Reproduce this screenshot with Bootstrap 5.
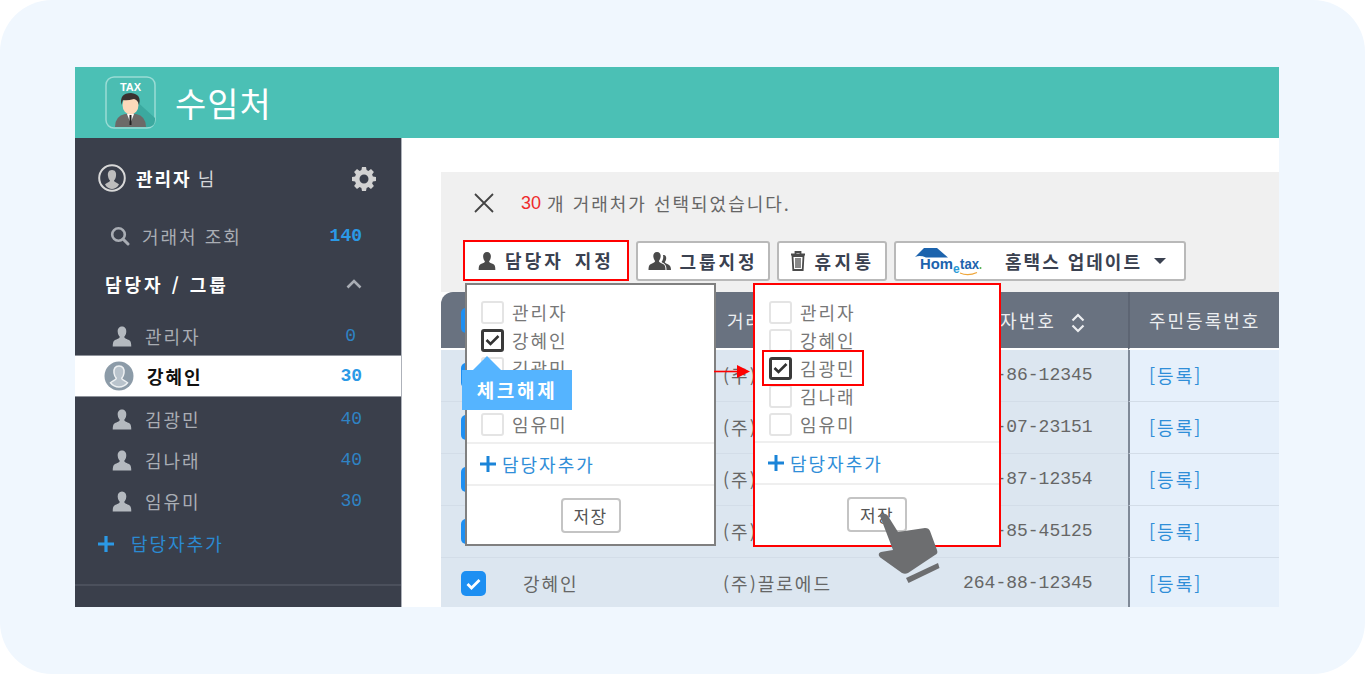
<!DOCTYPE html>
<html lang="ko">
<head>
  <meta charset="UTF-8" />
  <title>수임처</title>
  <link rel="stylesheet" href="https://cdn.jsdelivr.net/npm/bootstrap@5.3.0/dist/css/bootstrap.min.css" />
  <style>
    html, body { height: 100%; }
    body {
      margin: 0;
      background: #fff;
      overflow: hidden;
      font-family: "Noto Sans CJK KR", "Noto Sans", sans-serif;
      font-size: 18px;
      color: #666;
      letter-spacing: 2px;
    }
    .stage {
      width: 1365px;
      height: 674px;
      background: #f0f7fe;
      border-radius: 52px;
      padding: 67px 86px 67px 75px;
    }
    .frame { position: relative; width: 1204px; height: 540px; overflow: hidden; background: #fff; }
    .top-bar { height: 71px; background: #4bc0b5; padding-left: 30px; gap: 19px; }
    .top-bar h1 { margin: 0; font-size: 34px; font-weight: 400; color: #fff; letter-spacing: 1px; line-height: 1; }
    .body-wrap { height: 469px; }

    .side { width: 327px; flex: none; background: #3a3f4b; border-right: 1px solid #aeb2ba; color: #a9adb4; }
    .side-row { height: 41px; padding-right: 39px; }
    .side-user { height: 40px; margin-top: 20px; margin-bottom: 18px; padding-left: 23px; padding-right: 24px; }
    .side-user b { color: #fff; margin-left: 10px; font-weight: 700; }
    .side-user span { color: #d5d7da; margin-left: 6px; }
    .side-search { height: 40px; padding-left: 35px; padding-right: 39px; margin-bottom: 8px; }
    .side-search span { margin-left: 12px; }
    .side-group { height: 40px; padding-left: 30px; padding-right: 39px; margin-bottom: 13px; color: #fff; font-weight: 700; letter-spacing: 3px; }
    .side-item { padding-left: 37px; }
    .side-item span { margin-left: 13px; }
    .side-item.first { height: 39px; border-bottom: 1px solid #8f939b; }
    .side-item.on { background: #fff; color: #111; font-weight: 700; padding-left: 29px; border-bottom: 1px solid #8f939b; margin-bottom: 2px; }
    .side-item.on span { margin-left: 13px; }
    .count { font-family: "Liberation Mono", monospace; font-size: 18px; letter-spacing: 0; color: #2f83c4; }
    .count.strong { color: #2b99e6; font-weight: 700; }
    .count.zero { padding-right: 6px; }
    .side-add { height: 43px; padding-left: 23px; color: #2b8ad2; }
    .side-add span { margin-left: 17px; }
    .side-line { height: 2px; background: #4b505c; margin-top: 19px; }

    .main { flex: 1; padding: 34px 0 0 39px; }
    .tool-panel { height: 120px; background: #f0f0f0; padding: 0 0 0 22px; }
    .msg-row { height: 68px; padding: 0 0 6px 11px; }
    .msg-row .cnt { color: #ee2b2b; margin-left: 27px; font-family: "Liberation Sans", sans-serif; font-size: 18px; letter-spacing: 0; margin-right: 6px; }
    .tool-btns { gap: 7px; height: 42px; }
    .tool-btn {
      height: 40px;
      margin-top: 1px;
      background: #fff;
      border: 2px solid #b9b9b9;
      border-radius: 3px;
      color: #3a4150;
      font-weight: 700;
      font-size: 18px;
      letter-spacing: 3px;
      padding: 0;
      gap: 7px;
    }
    .tool-btn.assign { width: 166px; height: 41px; margin-top: 0; border-color: #f00; border-radius: 0; gap: 9px; word-spacing: 3px; }
    .tool-btn.group { width: 134px; }
    .tool-btn.trash { width: 110px; gap: 9px; letter-spacing: 3.4px; }
    .tool-btn.hometax { width: 292px; gap: 11px; letter-spacing: 2px; }
    .tool-btn.hometax svg { margin-right: 12px; }
    .caret-down { width: 0; height: 0; border-left: 6px solid transparent; border-right: 6px solid transparent; border-top: 6px solid #3a4150; margin-left: 1px; }

    .grid-table { width: 838px; table-layout: fixed; margin: 0; border-collapse: separate; border-spacing: 0; }
    .grid-table th {
      height: 58px;
      background: #697280;
      color: #eceef0;
      font-weight: 400;
      vertical-align: middle;
      border: 0;
      padding: 0;
      border-bottom: 2px solid #fff;
    }
    .grid-table th:first-child { border-top-left-radius: 12px; }
    .grid-table th.with-gap { padding-left: 4px; }
    .grid-table td {
      height: 52px;
      background: #dce6f0;
      color: #666;
      vertical-align: middle;
      padding: 0;
      border: 0;
      border-bottom: 1px solid #d3dde8;
    }
    .grid-table .pad-first { padding-left: 20px; }
    .grid-table .reg-no { font-family: "Liberation Mono", monospace; font-size: 18px; letter-spacing: 0; }
    .grid-table th.last, .grid-table td.last { padding-left: 19px; border-left: 2px solid #7f8997; }
    .grid-table th.last { border-left-color: #5d6573; }
    .grid-table td.last { background: #e6f0fb; color: #2f8ed8; }
    .tick-blue { display: flex; align-items: center; justify-content: center; width: 25px; height: 25px; background: #1d8ff2; border-radius: 5px; }

    .pop-box { position: absolute; top: 216px; background: #fff; padding-top: 13px; }
    .pop-one { left: 390px; width: 251px; height: 263px; border: 2px solid #808080; }
    .pop-two { left: 678px; width: 248px; height: 264px; border: 2px solid #f00; }
    .pop-row { height: 28px; padding-left: 14px; gap: 8px; color: #777; }
    .box-off { width: 23px; height: 23px; background: #fff; border: 2px solid #e4e4e4; border-radius: 3px; flex: none; }
    .box-on { width: 23px; height: 23px; background: #fff; border: 3px solid #3a3a3a; border-radius: 3px; flex: none; display: flex; align-items: center; justify-content: center; }
    .pop-add { height: 44px; margin-top: 3px; padding-left: 13px; gap: 6px; color: #2f8ed8; border-top: 2px solid #efefef; border-bottom: 2px solid #efefef; }
    .pop-one .pop-add { margin-top: 4px; }
    .pop-foot { padding-top: 12px; }
    .save-btn { width: 60px; height: 35px; padding: 0; background: #fff; border: 2px solid #c4c4c4; border-radius: 4px; color: #555; font-size: 17px; letter-spacing: 1.4px; }
    .pick-box { position: absolute; left: 687px; top: 283px; width: 102px; height: 36px; border: 2px solid #f00; background: transparent; }
    .tip-box {
      position: absolute; left: 387px; top: 303px; width: 110px; height: 40px;
      background: #55b4ff; color: #fff; font-weight: 700; font-size: 19px; letter-spacing: 2.7px;
    }
    .tip-box::before {
      content: ""; position: absolute; left: 11px; top: -14px;
      border-left: 14px solid transparent; border-right: 14px solid transparent; border-bottom: 14px solid #55b4ff;
    }
    .overlay-svg { position: absolute; left: 0; top: 0; pointer-events: none; }
  </style>
</head>
<body>
  <div class="stage">
    <div class="frame">
      <!-- Top bar -->
      <header class="top-bar d-flex align-items-center">
        <svg width="51" height="53" viewBox="0 0 51 53">
          <rect x="1" y="1" width="49" height="51" rx="8" fill="#4bbdb2" stroke="#9adcd5" stroke-width="1.5"/>
          <path d="M28 22 L50 42 V44 Q50 51 43 51 H22 Z" fill="#3ba99f"/>
          <text x="25.5" y="15" text-anchor="middle" font-family="Liberation Sans" font-size="11" font-weight="700" fill="#fff" letter-spacing="0">TAX</text>
          <path d="M10 51 Q10 40 20 38 H31 Q41 40 41 51 Z" fill="#6c6a68"/>
          <path d="M22 38 L25.500 47 L29 38 Z" fill="#fff"/>
          <rect x="24.500" y="39" width="2" height="10" fill="#222"/>
          <ellipse cx="25.500" cy="29" rx="8" ry="9.500" fill="#fcd9ba"/>
          <path d="M16.500 29 Q14 17 26 17 Q37 18 34 29 Q33 24 29 23 Q22 25 18 24 Q17 26 16.500 29 Z" fill="#3a3330"/>
        </svg>
        <h1>수임처</h1>
      </header>

      <div class="body-wrap d-flex">
        <!-- Sidebar -->
        <aside class="side">
          <div class="side-user d-flex align-items-center">
            <svg width="28" height="28" viewBox="0 0 28 28">
              <circle cx="14" cy="14" r="12.800" fill="#3a3f4b" stroke="#d8d8d8" stroke-width="2"/>
              <path d="M14 6 C10.500 6 9.500 9 10 12 C10.300 14 11 15.500 12 16.500 C12 18 9 18.500 7 20.500 C9 24 12 25 14 25 C16 25 19 24 21 20.500 C19 18.500 16 18 16 16.500 C17 15.500 17.700 14 18 12 C18.500 9 17.500 6 14 6 Z" fill="#bdbdbd"/>
            </svg>
            <b>관리자</b><span>님</span>
            <svg class="ms-auto" width="25" height="25" viewBox="0 0 24 24"><path fill="#d2d2d2" fill-rule="evenodd" d="M10 1h4l.6 3.100 1.800.8L19 3.100 21.900 6l-1.800 2.600.8 1.800L24 11v4l-3.100.6-.8 1.800 1.800 2.600L19 22.900l-2.600-1.800-1.800.8L14 25h-4l-.6-3.100-1.800-.8L5 22.900 2.100 20l1.800-2.600-.8-1.800L0 15v-4l3.100-.6.800-1.800L2.100 6 5 3.100l2.600 1.800 1.800-.8L10 1Zm2 7.500a4.500 4.500 0 1 0 0 9 4.500 4.500 0 0 0 0-9Z" transform="scale(.96)"/></svg>
          </div>
          <div class="side-search d-flex align-items-center">
            <svg width="20" height="20" viewBox="0 0 20 20"><circle cx="8.500" cy="8.500" r="6.300" fill="none" stroke="#a9adb4" stroke-width="2.600"/><path d="M13 13l5 5" stroke="#a9adb4" stroke-width="3" stroke-linecap="round"/></svg>
            <span>거래처 조회</span>
            <em class="count strong ms-auto fst-normal">140</em>
          </div>
          <div class="side-group d-flex align-items-center">
            담당자 / 그룹
            <svg class="ms-auto" width="16" height="10" viewBox="0 0 16 10"><path d="M1.500 8.500 8 2l6.500 6.500" fill="none" stroke="#a9adb4" stroke-width="2.600"/></svg>
          </div>
          <div class="side-row side-item first d-flex align-items-center">
            <svg width="20" height="23" viewBox="0 0 22 24"><use href="#person-icon" fill="#b4b9bf"/></svg>
            <span>관리자</span><em class="count zero ms-auto fst-normal">0</em>
          </div>
          <div class="side-row side-item on d-flex align-items-center">
            <svg width="30" height="30" viewBox="0 0 30 30">
              <circle cx="15" cy="15" r="14.500" fill="#8c9ba8"/>
              <path d="M15 5c-4 0-5.500 3-5 7 .3 2.300 1.200 4 2.300 5.200 0 1.600-3.300 2.400-5.800 4.600C9 25 12 26 15 26s6-1 8.500-4.200c-2.500-2.200-5.800-3-5.800-4.600 1.100-1.200 2-2.900 2.300-5.200.5-4-1-7-5-7Z" fill="#b9c3cc" stroke="#eef1f3" stroke-width="1.500"/>
            </svg>
            <span>강혜인</span><em class="count strong ms-auto fst-normal">30</em>
          </div>
          <div class="side-row side-item d-flex align-items-center">
            <svg width="20" height="23" viewBox="0 0 22 24"><use href="#person-icon" fill="#b4b9bf"/></svg>
            <span>김광민</span><em class="count ms-auto fst-normal">40</em>
          </div>
          <div class="side-row side-item d-flex align-items-center">
            <svg width="20" height="23" viewBox="0 0 22 24"><use href="#person-icon" fill="#b4b9bf"/></svg>
            <span>김나래</span><em class="count ms-auto fst-normal">40</em>
          </div>
          <div class="side-row side-item d-flex align-items-center">
            <svg width="20" height="23" viewBox="0 0 22 24"><use href="#person-icon" fill="#b4b9bf"/></svg>
            <span>임유미</span><em class="count ms-auto fst-normal">30</em>
          </div>
          <div class="side-add d-flex align-items-center">
            <svg width="16" height="16" viewBox="0 0 16 16"><path d="M8 0v16M0 8h16" stroke="#2b99e6" stroke-width="3.200"/></svg>
            <span>담당자추가</span>
          </div>
          <div class="side-line"></div>
        </aside>

        <!-- Main -->
        <main class="main">
          <div class="tool-panel">
            <div class="msg-row d-flex align-items-center">
              <svg width="20" height="20" viewBox="0 0 20 20"><path d="M1 1l18 18M19 1 1 19" stroke="#444" stroke-width="1.800"/></svg>
              <span class="cnt">30</span><span>개 거래처가 선택되었습니다.</span>
            </div>
            <div class="tool-btns d-flex">
              <button class="btn tool-btn assign d-flex align-items-center justify-content-center">
                <svg width="18" height="20" viewBox="0 0 22 24"><use href="#person-icon" fill="#4a4a4a"/></svg>담당자 지정
              </button>
              <button class="btn tool-btn group d-flex align-items-center justify-content-center">
                <svg width="24" height="20" viewBox="0 0 24 20">
                  <path d="M9 1c-3 0-4 2.500-3.600 5 .3 1.800 1 3 1.700 4 0 1.500-2.600 2-4.600 3.200C1 14 .5 16 .5 19h17c0-3-.5-5-2-5.800-2-1.200-4.600-1.700-4.600-3.200.7-1 1.400-2.200 1.700-4C13 3.500 12 1 9 1Z" fill="#4a4a4a"/>
                  <path d="M15 4c2.500-.5 3.500 1.500 3.200 3.800-.2 1.500-.8 2.500-1.400 3.300 0 1.200 2.200 1.700 3.900 2.700 1.300.7 2.300 2.200 2.300 5.200h-4.500c0-3-.5-5-2.500-6.500-1-.7-2-1-2.500-1.500 1.500-2 2.200-4.500 1.500-7Z" fill="#4a4a4a"/>
                </svg>그룹지정
              </button>
              <button class="btn tool-btn trash d-flex align-items-center justify-content-center">
                <svg width="16" height="20" viewBox="0 0 16 20">
                  <path d="M1 3.500h14M5.500 3V1h5v2" fill="none" stroke="#4a4a4a" stroke-width="1.800"/>
                  <path d="M2.500 5h11l-.8 14H3.300Z" fill="none" stroke="#4a4a4a" stroke-width="1.800"/>
                  <path d="M6 7v10M8 7v10M10 7v10" stroke="#4a4a4a" stroke-width="1.300"/>
                </svg>휴지통
              </button>
              <button class="btn tool-btn hometax d-flex align-items-center justify-content-center">
                <svg width="68" height="30" viewBox="0 0 68 30">
                  <path d="M1 11 10 2h13l11 9.500H12Q6 9 1 11Z" fill="#1c63ad"/>
                  <text x="6" y="23" font-family="Liberation Sans" font-size="15" font-weight="700" fill="#1c63ad" textLength="33" lengthAdjust="spacingAndGlyphs" letter-spacing="0">Hom</text>
                  <text x="39" y="27" font-family="Liberation Sans" font-size="12" font-weight="700" fill="#2a9ad6" letter-spacing="0">e</text>
                  <text x="46" y="23" font-family="Liberation Sans" font-size="15" font-weight="700" fill="#1c63ad" textLength="19" lengthAdjust="spacingAndGlyphs" letter-spacing="0">tax</text>
                  <circle cx="66.500" cy="22" r="1" fill="#4caf50"/>
                  <path d="M46 27q8 3.500 17-.5" fill="none" stroke="#f0a63a" stroke-width="1.200"/>
                </svg>
                <span>홈택스 업데이트</span>
                <i class="caret-down"></i>
              </button>
            </div>
          </div>

          <table class="table grid-table">
            <colgroup><col style="width:82px"><col style="width:200px"><col style="width:240px"><col style="width:165px"><col></colgroup>
            <thead>
              <tr>
                <th class="pad-first"><span class="tick-blue"></span></th>
                <th></th>
                <th class="with-gap">거래처명</th>
                <th>
                  사업자번호
                  <svg class="ms-2" width="14" height="20" viewBox="0 0 14 20"><path d="M1.500 7.500 7 2l5.500 5.500M1.500 12.500 7 18l5.500-5.500" fill="none" stroke="#eceef0" stroke-width="2.200"/></svg>
                </th>
                <th class="last">주민등록번호</th>
              </tr>
            </thead>
            <tbody id="grid-body"></tbody>
          </table>
        </main>
      </div>

      <!-- Before: assignee dropdown -->
      <div class="pop-box pop-one">
        <div class="pop-row d-flex align-items-center"><i class="box-off"></i>관리자</div>
        <div class="pop-row d-flex align-items-center"><i class="box-on"><svg width="15" height="12" viewBox="0 0 15 12"><path d="M1.500 6 5.500 10 13.500 2" fill="none" stroke="#333" stroke-width="2.600"/></svg></i>강혜인</div>
        <div class="pop-row d-flex align-items-center"><i class="box-off"></i>김광민</div>
        <div class="pop-row d-flex align-items-center"><i class="box-off"></i>김나래</div>
        <div class="pop-row d-flex align-items-center"><i class="box-off"></i>임유미</div>
        <div class="pop-add d-flex align-items-center">
          <svg width="16" height="16" viewBox="0 0 16 16"><path d="M8 0v16M0 8h16" stroke="#1a84d8" stroke-width="3"/></svg>담당자추가
        </div>
        <div class="pop-foot text-center"><button class="btn save-btn">저장</button></div>
      </div>

      <div class="tip-box d-flex align-items-center justify-content-center">체크해제</div>

      <!-- After: assignee dropdown -->
      <div class="pop-box pop-two">
        <div class="pop-row d-flex align-items-center"><i class="box-off"></i>관리자</div>
        <div class="pop-row d-flex align-items-center"><i class="box-off"></i>강혜인</div>
        <div class="pop-row d-flex align-items-center"><i class="box-on"><svg width="15" height="12" viewBox="0 0 15 12"><path d="M1.500 6 5.500 10 13.500 2" fill="none" stroke="#333" stroke-width="2.600"/></svg></i>김광민</div>
        <div class="pop-row d-flex align-items-center"><i class="box-off"></i>김나래</div>
        <div class="pop-row d-flex align-items-center"><i class="box-off"></i>임유미</div>
        <div class="pop-add d-flex align-items-center">
          <svg width="16" height="16" viewBox="0 0 16 16"><path d="M8 0v16M0 8h16" stroke="#1a84d8" stroke-width="3"/></svg>담당자추가
        </div>
        <div class="pop-foot text-center"><button class="btn save-btn">저장</button></div>
      </div>

      <div class="pick-box"></div>

      <!-- Arrow and hand, frame coordinates -->
      <svg class="overlay-svg" width="1204" height="540" viewBox="0 0 1204 540">
        <path d="M639 304.500H664" stroke="#f00" stroke-width="1.600"/>
        <path d="M662 298l13 6.500-13 6.500Z" fill="#f00"/>
        <g transform="translate(-75 -67)">
          <path d="M880 516c2-3 6-3 8 0l10 16 27-4c3 0 4 1 5 3l7 19c1 3 0 4-2 5l-27 18c-2 1-4 1-6 0l-21-15c-3-2-3-5 0-6l12-2Z" fill="#6d6e70"/>
          <path d="M906 578l32-15 1.500 5-31 15Z" fill="#6d6e70"/>
        </g>
      </svg>
    </div>
  </div>

  <!-- shared person silhouette -->
  <svg width="0" height="0" class="position-absolute">
    <symbol id="person-icon" viewBox="0 0 22 24">
      <path d="M11 1C7.500 1 6 3.800 6.300 7c.2 2.300 1 4 2.200 5.300 0 2-3 2.500-5.500 3.700C1.300 17 .8 19 .8 23h20.400c0-4-.5-6-2.200-7-2.500-1.200-5.500-1.700-5.500-3.700 1.200-1.300 2-3 2.200-5.300C16 3.800 14.500 1 11 1Z"/>
    </symbol>
  </svg>

  <script>
    const rows = ["264-86-12345", "264-07-23151", "264-87-12354", "264-85-45125", "264-88-12345"];
    const tick = '<svg width="15" height="12" viewBox="0 0 15 12"><path d="M1.500 6 5.500 10 13.500 2" fill="none" stroke="#fff" stroke-width="2.800"/></svg>';
    // the first four name cells sit under the dropdowns
    document.getElementById("grid-body").innerHTML = rows.map((no, i) => `
      <tr>
        <td class="pad-first"><span class="tick-blue">${tick}</span></td>
        <td>${i === 4 ? "강혜인" : ""}</td>
        <td>(주)끌로에드</td>
        <td class="reg-no">${no}</td>
        <td class="last">[등록]</td>
      </tr>`).join("");
  </script>
  <script src="https://cdn.jsdelivr.net/npm/bootstrap@5.3.0/dist/js/bootstrap.bundle.min.js"></script>
</body>
</html>
